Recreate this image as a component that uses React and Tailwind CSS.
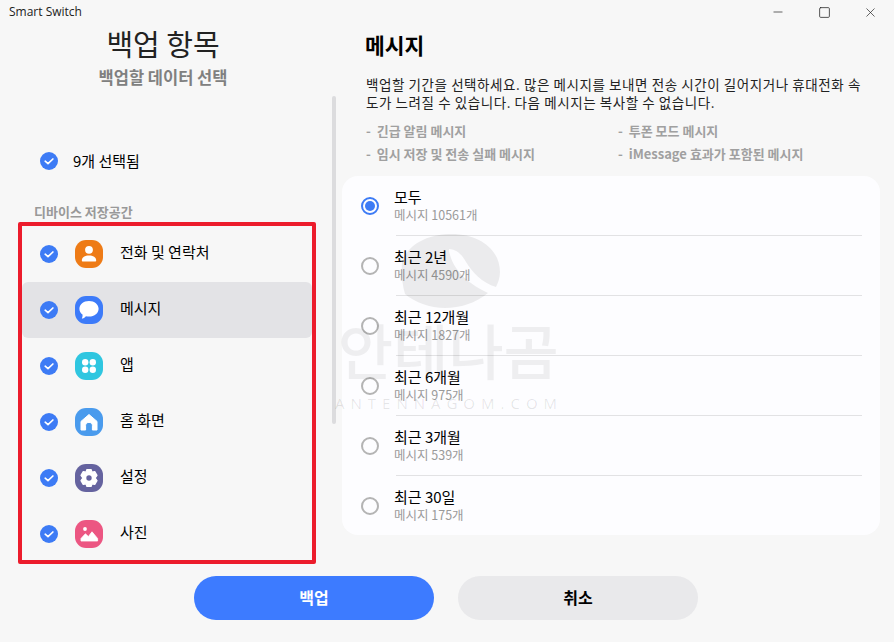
import { Minus, Square, X } from "lucide-react";

const font = { fontFamily: '"Noto Sans CJK KR", "Noto Sans", sans-serif' };

const Check = () => (
    <svg width="18" height="18" viewBox="0 0 18 18" className="shrink-0">
        <circle cx="9" cy="9" r="9" fill="#3d7bf5" />
        <path d="M5.2 9.2 L8 11.6 L12.9 7" fill="none" stroke="#fff" strokeWidth="1.7" strokeLinecap="round" strokeLinejoin="round" />
    </svg>
);

const ContactIcon = () => (
    <svg width="28" height="28" viewBox="0 0 28 28">
        <circle cx="14" cy="9.8" r="3.9" fill="#fff" />
        <path d="M6.8 20.6 C6.8 16.8 10 15.4 14 15.4 C18 15.4 21.2 16.8 21.2 20.6 C21.2 21.2 20.9 21.4 20.4 21.4 H7.6 C7.1 21.4 6.8 21.2 6.8 20.6 Z" fill="#fff" />
    </svg>
);

const MessageIcon = () => (
    <svg width="28" height="28" viewBox="0 0 28 28">
        <path d="M14 5 C19.6 5 23.6 8.4 23.6 12.8 C23.6 17.2 19.6 20.6 14 20.6 C12.9 20.6 11.9 20.5 10.9 20.2 C9.8 21.6 8.2 22.4 6.8 22.6 C7.5 21.4 7.7 20 7.5 18.6 C5.6 17.2 4.4 15.2 4.4 12.8 C4.4 8.4 8.4 5 14 5 Z" fill="#fff" />
    </svg>
);

const AppsIcon = () => (
    <svg width="28" height="28" viewBox="0 0 28 28" fill="#fff">
        <circle cx="10.2" cy="10.2" r="3.2" />
        <circle cx="17.8" cy="10.2" r="3.2" />
        <circle cx="10.2" cy="17.8" r="3.2" />
        <circle cx="17.8" cy="17.8" r="3.2" />
    </svg>
);

const HomeIcon = () => (
    <svg width="28" height="28" viewBox="0 0 28 28">
        <path d="M14 6.5 L22 13.4 V22 H17.4 V17.5 C17.4 15.6 16 14.4 14 14.4 C12 14.4 10.6 15.6 10.6 17.5 V22 H6 V13.4 Z" fill="#fff" stroke="#fff" strokeWidth="1" strokeLinejoin="round" />
    </svg>
);

const GearIcon = () => (
    <svg width="28" height="28" viewBox="0 0 28 28">
        <path d="M11.8 5.6 H16.2 L17 8.2 L19.8 7.6 L22 11.4 L20.2 14 L22 16.6 L19.8 20.4 L17 19.8 L16.2 22.4 H11.8 L11 19.8 L8.2 20.4 L6 16.6 L7.8 14 L6 11.4 L8.2 7.6 L11 8.2 Z" fill="#fff" stroke="#fff" strokeWidth="1.2" strokeLinejoin="round" />
        <circle cx="14" cy="14" r="2.7" fill="#65639f" />
    </svg>
);

const PhotoIcon = () => (
    <svg width="28" height="28" viewBox="0 0 28 28" fill="#fff">
        <circle cx="10" cy="9" r="1.9" />
        <path d="M6 21 V18.5 L10.4 13.8 L13.4 16.6 L17 11.8 L22.6 18.5 V21 Z" stroke="#fff" strokeWidth="0.8" strokeLinejoin="round" />
    </svg>
);

const items = [
    { label: "전화 및 연락처", color: "bg-[#ee7b16]", Icon: ContactIcon },
    { label: "메시지", color: "bg-[#3d7bf9]", Icon: MessageIcon, active: true },
    { label: "앱", color: "bg-[#2fc6e0]", Icon: AppsIcon },
    { label: "홈 화면", color: "bg-[#4a9bed]", Icon: HomeIcon },
    { label: "설정", color: "bg-[#65639f]", Icon: GearIcon },
    { label: "사진", color: "bg-[#ec5682]", Icon: PhotoIcon },
];

const periods = [
    { title: "모두", count: "메시지 10561개", selected: true },
    { title: "최근 2년", count: "메시지 4590개" },
    { title: "최근 12개월", count: "메시지 1827개" },
    { title: "최근 6개월", count: "메시지 975개" },
    { title: "최근 3개월", count: "메시지 539개" },
    { title: "최근 30일", count: "메시지 175개" },
];

export default function App() {
    return (
        <div className="relative w-[894px] h-[642px] overflow-hidden bg-[#f7f7f7] text-black" style={font}>
            {/* Title bar */}
            <div className="h-6 flex items-center justify-between">
                <span className="pl-[9px] text-[12px] text-[#222]" style={{ fontFamily: '"Open Sans", sans-serif' }}>Smart Switch</span>
                <div className="flex items-center pr-[1px] text-[#222]">
                    <div className="w-[46px] flex justify-center"><Minus size={14} strokeWidth={1.2} /></div>
                    <div className="w-[46px] flex justify-center"><Square size={13} strokeWidth={1.4} /></div>
                    <div className="w-[46px] flex justify-center"><X size={15} strokeWidth={1.1} /></div>
                </div>
            </div>

            <div className="flex h-[552px]">
                {/* Left column */}
                <div className="relative w-[342px] shrink-0">
                    <h1 className="h-[38px] leading-[38px] w-[326px] text-center text-[29px] font-normal text-[#222]">백업 항목</h1>
                    <p className="mt-[3px] h-6 leading-6 w-[326px] text-center text-[16.5px] font-bold text-[#808080]">백업할 데이터 선택</p>
                    <div className="mt-[60px] h-6 pl-10 flex items-center gap-[15px] text-[15px]">
                        <Check />
                        <span>9개 선택됨</span>
                    </div>
                    <p className="mt-[31px] h-4 leading-4 pl-[34px] text-[13px] font-bold text-[#999]">디바이스 저장공간</p>

                    <div className="mt-[2px] ml-[18px] w-[298px] h-[342px] border-4 border-[#ec1c2c] rounded-[2px] overflow-hidden">
                        {items.map(({ label, color, Icon, active }) => (
                            <div key={label} className={`h-14 pl-[18px] flex items-center rounded-[6px] ${active ? "bg-[#e3e3e6]" : ""}`}>
                                <Check />
                                <div className={`ml-[17px] w-7 h-7 rounded-[11px] ${color}`}>
                                    <Icon />
                                </div>
                                <span className="ml-[17px] pb-[3px] text-[15px]">{label}</span>
                            </div>
                        ))}
                    </div>

                    {/* Scrollbar */}
                    <div className="absolute left-[332px] top-[72px] w-1 h-[328px] rounded-full bg-[#dcdcde]" />
                </div>

                {/* Right column */}
                <div className="w-[538px]">
                    <h2 className="mt-[7px] ml-[23px] h-7 leading-7 text-[21.5px] font-bold">메시지</h2>
                    <p className="mt-[16px] ml-[24px] w-[500px] text-[13.5px] tracking-[0.57px] leading-[18px] text-[#222]">
                        백업할 기간을 선택하세요. 많은 메시지를 보내면 전송 시간이 길어지거나 휴대전화 속도가 느려질 수 있습니다. 다음 메시지는 복사할 수 없습니다.
                    </p>
                    <div className="mt-[11px] ml-[24px] grid grid-cols-[252px_1fr] gap-y-[5px] text-[13px] leading-[18px] font-bold text-[#a0a0a0]">
                        <span>-&nbsp;&nbsp;긴급 알림 메시지</span>
                        <span>-&nbsp;&nbsp;투폰 모드 메시지</span>
                        <span>-&nbsp;&nbsp;임시 저장 및 전송 실패 메시지</span>
                        <span>-&nbsp;&nbsp;iMessage 효과가 포함된 메시지</span>
                    </div>

                    <div className="mt-[13px] h-[359px] rounded-[16px] bg-[#fdfdff]">
                        {periods.map((p, i) => (
                            <div key={p.title}>
                                <div className="h-[59px] pl-[19px] flex items-center">
                                    {p.selected ? (
                                        <span className="w-[18px] h-[18px] rounded-full border-2 border-[#3d7bf5] flex items-center justify-center">
                                            <span className="w-[10px] h-[10px] rounded-full bg-[#3d7bf5]" />
                                        </span>
                                    ) : (
                                        <span className="w-[18px] h-[18px] rounded-full border-2 border-[#b4b4b4]" />
                                    )}
                                    <div className="ml-[15px] pb-[2px]">
                                        <div className="text-[15px] leading-[19px]">{p.title}</div>
                                        <div className="text-[12.5px] leading-[17px] text-[#9a9a9a]">{p.count}</div>
                                    </div>
                                </div>
                                {i < periods.length - 1 && <div className="ml-[54px] mr-[18px] h-px bg-[#e2e2e4]" />}
                            </div>
                        ))}
                    </div>
                </div>
            </div>

            {/* Buttons */}
            <div className="pl-[194px] flex gap-6">
                <button className="w-[240px] h-11 pb-[3px] rounded-full bg-[#3d7bff] text-white text-[16px] font-bold">백업</button>
                <button className="w-[240px] h-11 pb-[3px] rounded-full bg-[#e9e9eb] text-black text-[16px] font-bold">취소</button>
            </div>

            {/* Watermark */}
            <div className="absolute left-[330px] top-[232px] w-[240px] h-[185px] pointer-events-none">
                <svg width="240" height="80" viewBox="330 232 240 80" className="absolute left-0 top-0">
                    <path d="M402 262 C408 244 428 234 452 234 C480 234 500 250 500 272 C500 278 498 283 496 287 C482 283 472 272 466 262 C462 255 458 250 449 249 C450 262 460 280 488 293 C476 303 460 308 445 308 C430 308 414 302 405 294 C402 284 401 272 402 262 Z" fill="rgba(0,0,0,0.07)" />
                </svg>
                <div className="absolute left-[8px] top-[82px] text-[60px] leading-[70px] font-medium text-black/[0.06] whitespace-nowrap">안테나곰</div>
                <div className="absolute left-[5px] top-[162px] text-[15px] leading-[18px] tracking-[6px] text-black/[0.1] whitespace-nowrap" style={{ fontFamily: '"Open Sans", sans-serif' }}>ANTENNAGOM.COM</div>
            </div>
        </div>
    );
}
